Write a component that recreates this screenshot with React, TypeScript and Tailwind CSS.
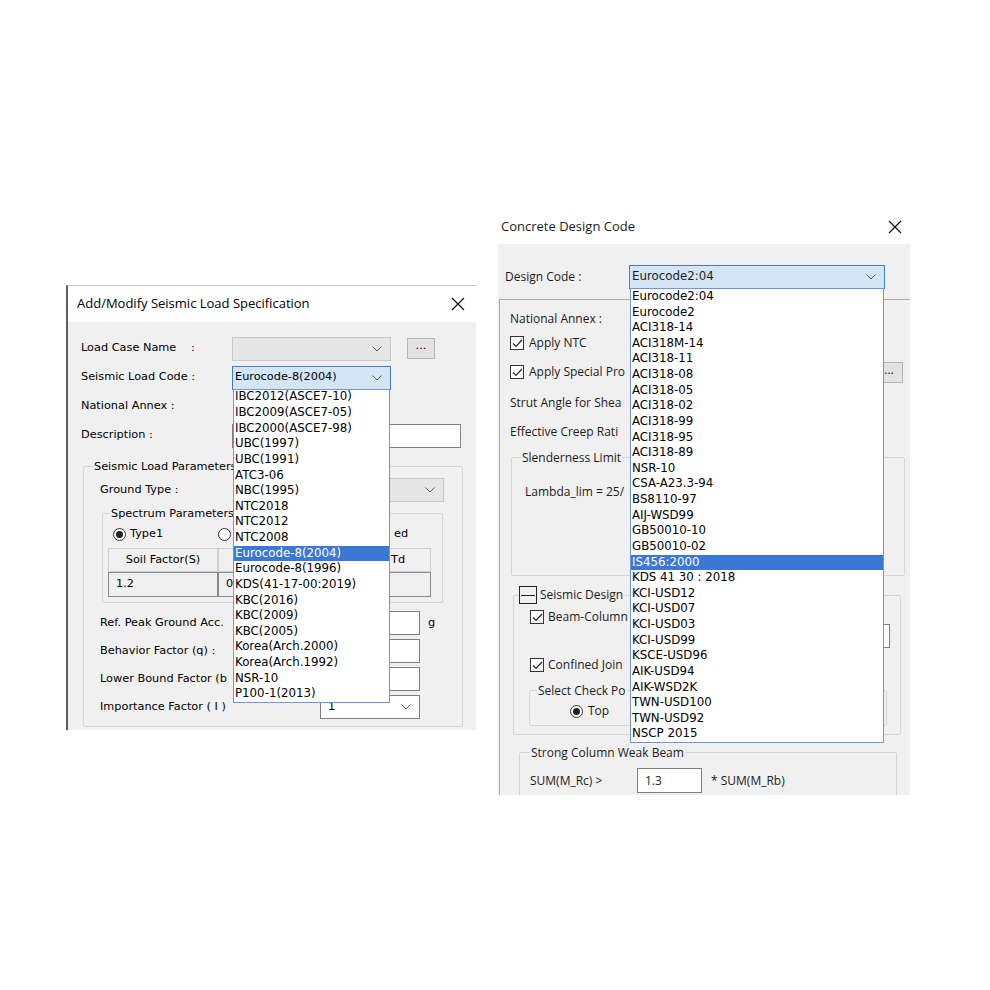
import type { ReactNode } from 'react';

const seismicCodes = [
  'IBC2012(ASCE7-10)',
  'IBC2009(ASCE7-05)',
  'IBC2000(ASCE7-98)',
  'UBC(1997)',
  'UBC(1991)',
  'ATC3-06',
  'NBC(1995)',
  'NTC2018',
  'NTC2012',
  'NTC2008',
  'Eurocode-8(2004)',
  'Eurocode-8(1996)',
  'KDS(41-17-00:2019)',
  'KBC(2016)',
  'KBC(2009)',
  'KBC(2005)',
  'Korea(Arch.2000)',
  'Korea(Arch.1992)',
  'NSR-10',
  'P100-1(2013)',
];

const concreteCodes = [
  'Eurocode2:04',
  'Eurocode2',
  'ACI318-14',
  'ACI318M-14',
  'ACI318-11',
  'ACI318-08',
  'ACI318-05',
  'ACI318-02',
  'ACI318-99',
  'ACI318-95',
  'ACI318-89',
  'NSR-10',
  'CSA-A23.3-94',
  'BS8110-97',
  'AIJ-WSD99',
  'GB50010-10',
  'GB50010-02',
  'IS456:2000',
  'KDS 41 30 : 2018',
  'KCI-USD12',
  'KCI-USD07',
  'KCI-USD03',
  'KCI-USD99',
  'KSCE-USD96',
  'AIK-USD94',
  'AIK-WSD2K',
  'TWN-USD100',
  'TWN-USD92',
  'NSCP 2015',
];

function Chevron() {
  return (
    <svg width="10" height="6" viewBox="0 0 10 6" className="shrink-0">
      <path d="M0.5 0.5 L5 5 L9.5 0.5" fill="none" stroke="#5a5a5a" strokeWidth="1" />
    </svg>
  );
}

function CloseX() {
  return (
    <svg width="14" height="14" viewBox="0 0 14 14">
      <path d="M1 1 L13 13 M13 1 L1 13" stroke="#111" strokeWidth="1.2" />
    </svg>
  );
}

function DropList({ items, selected }: { items: string[]; selected: string }) {
  return (
    <div className="absolute left-0 top-full z-10 w-full border border-[#6f97d8] bg-white font-['DejaVu_Sans',sans-serif] text-[11.8px]">
      {items.map((item) => (
        <div
          key={item}
          className={`flex h-[15.63px] items-center whitespace-nowrap pl-[1px] leading-none ${
            item === selected ? 'bg-[#3b78d6] text-white' : 'text-black'
          }`}
        >
          {item}
        </div>
      ))}
    </div>
  );
}

function Combo({
  value = '',
  active = false,
  className = '',
  children,
}: {
  value?: string;
  active?: boolean;
  className?: string;
  children?: ReactNode;
}) {
  return (
    <div
      className={`relative flex h-[24px] items-center justify-between pl-[2px] pr-[8px] ${
        active ? 'border border-[#3c7dcc] bg-[#d3e5f6]' : 'border border-[#c9c9c9] bg-[#e6e6e6]'
      } ${className}`}
    >
      <span className="whitespace-nowrap">{value}</span>
      <Chevron />
      {children}
    </div>
  );
}

function TextBox({ value = '', className = '' }: { value?: string; className?: string }) {
  return (
    <div className={`flex h-[24px] items-center border border-[#7f7f7f] bg-white pl-[7px] ${className}`}>
      {value}
    </div>
  );
}

function Radio({ checked = false }: { checked?: boolean }) {
  return (
    <span className="flex h-[13px] w-[13px] shrink-0 items-center justify-center rounded-full border border-[#333] bg-white">
      {checked && <span className="h-[7px] w-[7px] rounded-full bg-[#222]" />}
    </span>
  );
}

function Check() {
  return (
    <span className="flex h-[14px] w-[14px] shrink-0 items-center justify-center border border-[#333] bg-white">
      <svg width="11" height="9" viewBox="0 0 11 9">
        <path d="M1 4.5 L4 7.5 L10 1" fill="none" stroke="#222" strokeWidth="1.2" />
      </svg>
    </span>
  );
}

// Texts that sit under the open lists only keep the part that shows.
function SeismicDialog() {
  return (
    <div className="mt-[285px] flex w-[410px] flex-col border-l-2 border-t border-l-[#5f5f5f] border-t-[#c4c4c4] font-['DejaVu_Sans',sans-serif] text-[11.3px] text-black">
      <div className="flex h-[36px] items-center justify-between bg-white pl-[9px] pr-[11px]">
        <span className="font-['Open_Sans',sans-serif] text-[13px]">Add/Modify Seismic Load Specification</span>
        <CloseX />
      </div>

      <div className="flex h-[408px] flex-col bg-[#f0f0f0] pt-[12px]">
        <div className="flex h-[29px] items-center pl-[13px]">
          <span className="w-[151px] whitespace-nowrap">
            <span className="inline-block w-[110px]">Load Case Name</span>:
          </span>
          <Combo className="w-[159px]" />
          <div className="ml-[16px] flex h-[21px] w-[28px] items-center justify-center border border-[#b5b5b5] bg-[#e3e3e3] pb-[4px]">
            ...
          </div>
        </div>

        <div className="flex h-[29px] items-center pl-[13px]">
          <span className="w-[151px]">Seismic Load Code :</span>
          <Combo value="Eurocode-8(2004)" active className="z-10 w-[159px]">
            <DropList items={seismicCodes} selected="Eurocode-8(2004)" />
          </Combo>
        </div>

        <div className="flex h-[29px] items-center pl-[13px]">
          <span className="w-[151px]">National Annex :</span>
        </div>

        <div className="flex h-[29px] items-center pl-[13px]">
          <span className="w-[151px]">Description :</span>
          <TextBox className="w-[229px]" />
        </div>

        <fieldset className="ml-[15px] mt-[9px] w-[380px] rounded-[2px] border border-[#d6d6d6] pb-[5px]">
          <legend className="ml-[9px] whitespace-nowrap px-[1px] leading-[15px]">Seismic Load Parameters</legend>

          <div className="mt-[4px] flex h-[24px] items-center pl-[16px]">
            <span className="w-[220px]">Ground Type :</span>
            <Combo className="w-[124px]" />
          </div>

          <fieldset className="ml-[18px] mt-[4px] h-[97px] w-[341px] rounded-[2px] border border-[#d6d6d6]">
            <legend className="ml-[7px] whitespace-nowrap px-[1px] leading-[15px]">Spectrum Parameters</legend>
            <div className="mt-[5px] flex h-[16px] items-center pl-[10px]">
              <Radio checked />
              <span className="ml-[4px] w-[88px]">Type1</span>
              <Radio />
              <span className="ml-[163px]">ed</span>
            </div>
            <div className="ml-[5px] mt-[6px] grid w-[323px] grid-cols-[110px_71px_71px_71px]">
              {['Soil Factor(S)', '', '', 'Td'].map((h, i) => (
                <div
                  key={i}
                  className={`flex h-[24px] items-center border border-[#cfcfcf] bg-[#f0f0f0] ${
                    i === 3 ? 'pl-[30px]' : 'justify-center'
                  }`}
                >
                  {h}
                </div>
              ))}
              {['1.2', '0', '', ''].map((v, i) => (
                <div key={i} className="flex h-[25px] items-center border border-[#8a8a8a] bg-[#f0f0f0] pl-[7px]">
                  {v}
                </div>
              ))}
            </div>
          </fieldset>

          <div className="mt-[6px] flex h-[28px] items-center pl-[16px]">
            <span className="w-[220px] whitespace-nowrap">Ref. Peak Ground Acc.</span>
            <TextBox className="w-[100px]" />
            <span className="ml-[8px]">g</span>
          </div>
          <div className="flex h-[28px] items-center pl-[16px]">
            <span className="w-[220px] whitespace-nowrap">Behavior Factor (q) :</span>
            <TextBox className="w-[100px]" />
          </div>
          <div className="flex h-[28px] items-center pl-[16px]">
            <span className="w-[220px] whitespace-nowrap">Lower Bound Factor (b</span>
            <TextBox className="w-[100px]" />
          </div>
          <div className="flex h-[28px] items-center pl-[16px]">
            <span className="w-[220px] whitespace-nowrap">Importance Factor ( I )</span>
            <div className="flex h-[24px] w-[100px] items-center justify-between border border-[#7f7f7f] bg-white pl-[7px] pr-[8px]">
              <span>1</span>
              <Chevron />
            </div>
          </div>
        </fieldset>
      </div>
    </div>
  );
}

function ConcreteDialog() {
  return (
    <div className="ml-[22px] mt-[210px] flex w-[412px] flex-col font-['Open_Sans',sans-serif] text-[12px] text-[#1c1c1c]">
      <div className="flex h-[34px] items-center justify-between bg-white pl-[3px] pr-[8px]">
        <span className="text-[13px]">Concrete Design Code</span>
        <CloseX />
      </div>

      <div className="flex h-[551px] flex-col overflow-hidden bg-[#f0f0f0] pt-[21px]">
        <div className="flex h-[24px] items-center pl-[7px]">
          <span className="w-[124px]">Design Code :</span>
          <Combo value="Eurocode2:04" active className="z-10 w-[256px] font-['DejaVu_Sans',sans-serif] text-[11.8px]">
            <DropList items={concreteCodes} selected="IS456:2000" />
          </Combo>
        </div>

        <div className="ml-[1px] mt-[10px] flex flex-1 flex-col border-l border-t border-[#a9a9a9]">
          <div className="mt-[7px] flex h-[24px] items-center pl-[10px]">National Annex :</div>
          <div className="flex h-[24px] items-center pl-[10px]">
            <Check />
            <span className="ml-[5px]">Apply NTC</span>
          </div>
          <div className="mt-[3px] flex h-[28px] items-center pl-[10px] pr-[7px]">
            <Check />
            <span className="ml-[5px] whitespace-nowrap">Apply Special Pro</span>
            <div className="ml-auto flex h-[21px] w-[28px] items-center justify-center border border-[#b5b5b5] bg-[#e3e3e3] pb-[4px]">
              ...
            </div>
          </div>
          <div className="mt-[3px] flex h-[28px] items-center pl-[10px]">Strut Angle for Shea</div>
          <div className="mt-[1px] flex h-[28px] items-center pl-[10px]">Effective Creep Rati</div>

          <fieldset className="ml-[11px] mt-[4px] h-[126px] w-[394px] rounded-[2px] border border-[#d6d6d6]">
            <legend className="ml-[9px] px-[1px] leading-[15px]">Slenderness Limit</legend>
            <div className="mt-[17px] flex h-[20px] items-center pl-[13px]">Lambda_lim = 25/</div>
          </fieldset>

          <fieldset className="ml-[13px] mt-[10px] h-[149px] w-[388px] rounded-[2px] border border-[#d6d6d6]">
            <legend className="ml-[5px] flex items-center pr-[2px]">
              <span className="flex h-[18px] w-[18px] items-center justify-center border border-[#222]">
                <span className="h-px w-[14px] bg-[#222]" />
              </span>
              <span className="ml-[3px] whitespace-nowrap">Seismic Design</span>
            </legend>
            <div className="flex h-[44px] items-start pl-[16px] pr-[10px]">
              <div className="mt-[3px] flex h-[20px] items-center">
                <Check />
                <span className="ml-[4px] whitespace-nowrap">Beam-Column</span>
              </div>
              <div className="ml-auto h-[24px] w-[250px] self-end border border-[#7f7f7f] bg-white" />
            </div>
            <div className="mt-[7px] flex h-[20px] items-center pl-[16px]">
              <Check />
              <span className="ml-[4px] whitespace-nowrap">Confined Join</span>
            </div>
            <fieldset className="ml-[15px] mt-[8px] h-[43px] w-[358px] rounded-[2px] border border-[#d6d6d6]">
              <legend className="ml-[7px] whitespace-nowrap px-[1px] leading-[15px]">Select Check Po</legend>
              <div className="mt-[4px] flex h-[18px] items-center pl-[40px]">
                <Radio checked />
                <span className="ml-[5px]">Top</span>
              </div>
            </fieldset>
          </fieldset>

          <fieldset className="ml-[19px] mt-[10px] h-[80px] w-[378px] rounded-[2px] border border-[#d6d6d6]">
            <legend className="ml-[10px] px-[1px] leading-[15px]">Strong Column Weak Beam</legend>
            <div className="mt-[8px] flex h-[25px] items-center pl-[10px]">
              <span className="w-[107px]">SUM(M_Rc) &gt;</span>
              <TextBox value="1.3" className="h-[25px] w-[65px]" />
              <span className="ml-[9px]">* SUM(M_Rb)</span>
            </div>
          </fieldset>
        </div>
      </div>
    </div>
  );
}

export default function App() {
  return (
    <div className="flex h-[990px] w-[990px] items-start bg-white pl-[66px]">
      <SeismicDialog />
      <ConcreteDialog />
    </div>
  );
}
